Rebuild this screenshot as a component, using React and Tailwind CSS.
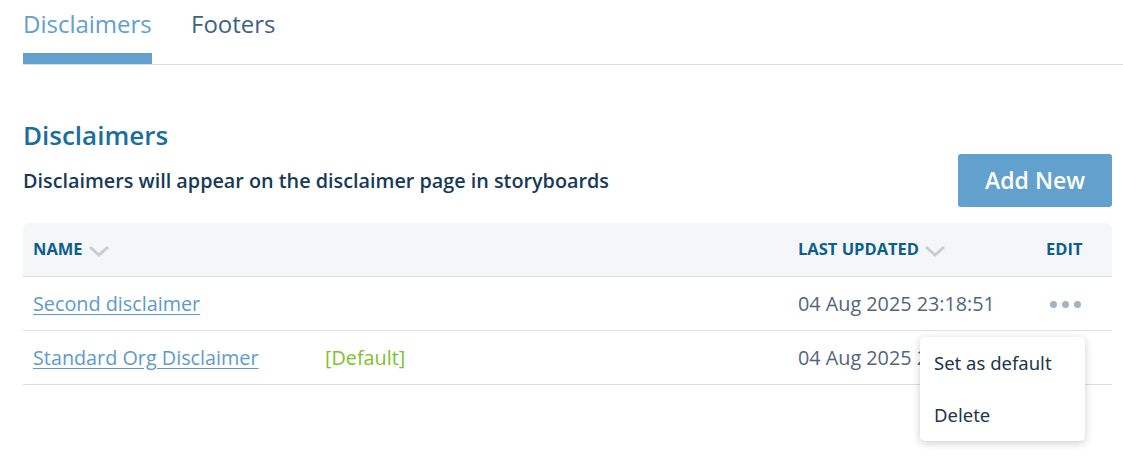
const Chevron = () => (
  <svg width="22" height="14" viewBox="0 0 22 14" className="ml-[5px] mt-[2px]">
    <path d="M2 3 L11 11 L20 3" fill="none" stroke="#c9cdd2" strokeWidth="3" />
  </svg>
);

const rows = [
  { name: 'Second disclaimer', updated: '04 Aug 2025 23:18:51', dots: true },
  { name: 'Standard Org Disclaimer', updated: '04 Aug 2025 23:18:51', isDefault: true },
];

export default function App() {
  return (
    <div className="relative w-[1123px] h-[465px] bg-white font-['Open_Sans',sans-serif]">
      {/* tabs */}
      <div className="ml-[23px] flex border-b border-[#dcdfe3] h-[65px]">
        <div className="w-[129px] border-b-[11px] border-[#62a0cd] pt-[8px]">
          <span className="text-[24px] leading-[32px] font-medium text-[#62a0cd]">Disclaimers</span>
        </div>
        <div className="ml-[39px] pt-[8px]">
          <span className="text-[24px] leading-[32px] font-medium text-[#3f6180]">Footers</span>
        </div>
      </div>

      <div className="pl-[23px] w-[1112px]">
        <h2 className="mt-[53px] text-[26px] leading-[34px] font-semibold text-[#1a6e9e]">Disclaimers</h2>
        <div className="flex items-center justify-between mt-[2px]">
          <p className="text-[19.8px] leading-[26px] font-semibold text-[#173a5a]">
            Disclaimers will appear on the disclaimer page in storyboards
          </p>
          <button className="w-[154px] h-[53px] rounded-[3px] bg-[#62a0cd] text-white text-[23px] font-semibold">
            Add New
          </button>
        </div>

        {/* table */}
        <div className="mt-[16px]">
          <div className="flex items-center h-[54px] bg-[#f5f6f8] rounded-t-[6px] border-b border-[#d9dfe6] text-[16.5px] font-bold text-[#0b5f8e]">
            <div className="flex items-center pl-[10px] w-[775px]">
              NAME <Chevron />
            </div>
            <div className="flex items-center w-[248px]">
              LAST UPDATED <Chevron />
            </div>
            <div>EDIT</div>
          </div>
          {rows.map((r) => (
            <div key={r.name} className="flex items-center h-[54px] border-b border-[#d9dfe6] text-[19.8px]">
              <div className="flex items-center pl-[10px] w-[775px]">
                <a className="w-[292px] underline text-[#5e9acb] underline-offset-[3px]">{r.name}</a>
                {r.isDefault && <span className="text-[#7cc327]">[Default]</span>}
              </div>
              <div className="w-[252px] text-[#52667a]">{r.updated}</div>
              {r.dots && (
                <div className="flex gap-[5px] mt-[2px]">
                  <span className="w-[7px] h-[7px] rounded-full bg-[#a0b5c7]" />
                  <span className="w-[7px] h-[7px] rounded-full bg-[#a0b5c7]" />
                  <span className="w-[7px] h-[7px] rounded-full bg-[#a0b5c7]" />
                </div>
              )}
            </div>
          ))}
        </div>
      </div>

      {/* dropdown menu */}
      <div className="absolute left-[920px] top-[337px] w-[165px] h-[104px] bg-white rounded-[5px] shadow-[0_2px_8px_rgba(0,0,0,0.2)] font-['Noto_Sans',sans-serif] text-[18.5px] text-[#1d3650]">
        <div className="pl-[14px] pt-[13px] leading-[26px]">Set as default</div>
        <div className="pl-[14px] pt-[26px] leading-[26px]">Delete</div>
      </div>
    </div>
  );
}
